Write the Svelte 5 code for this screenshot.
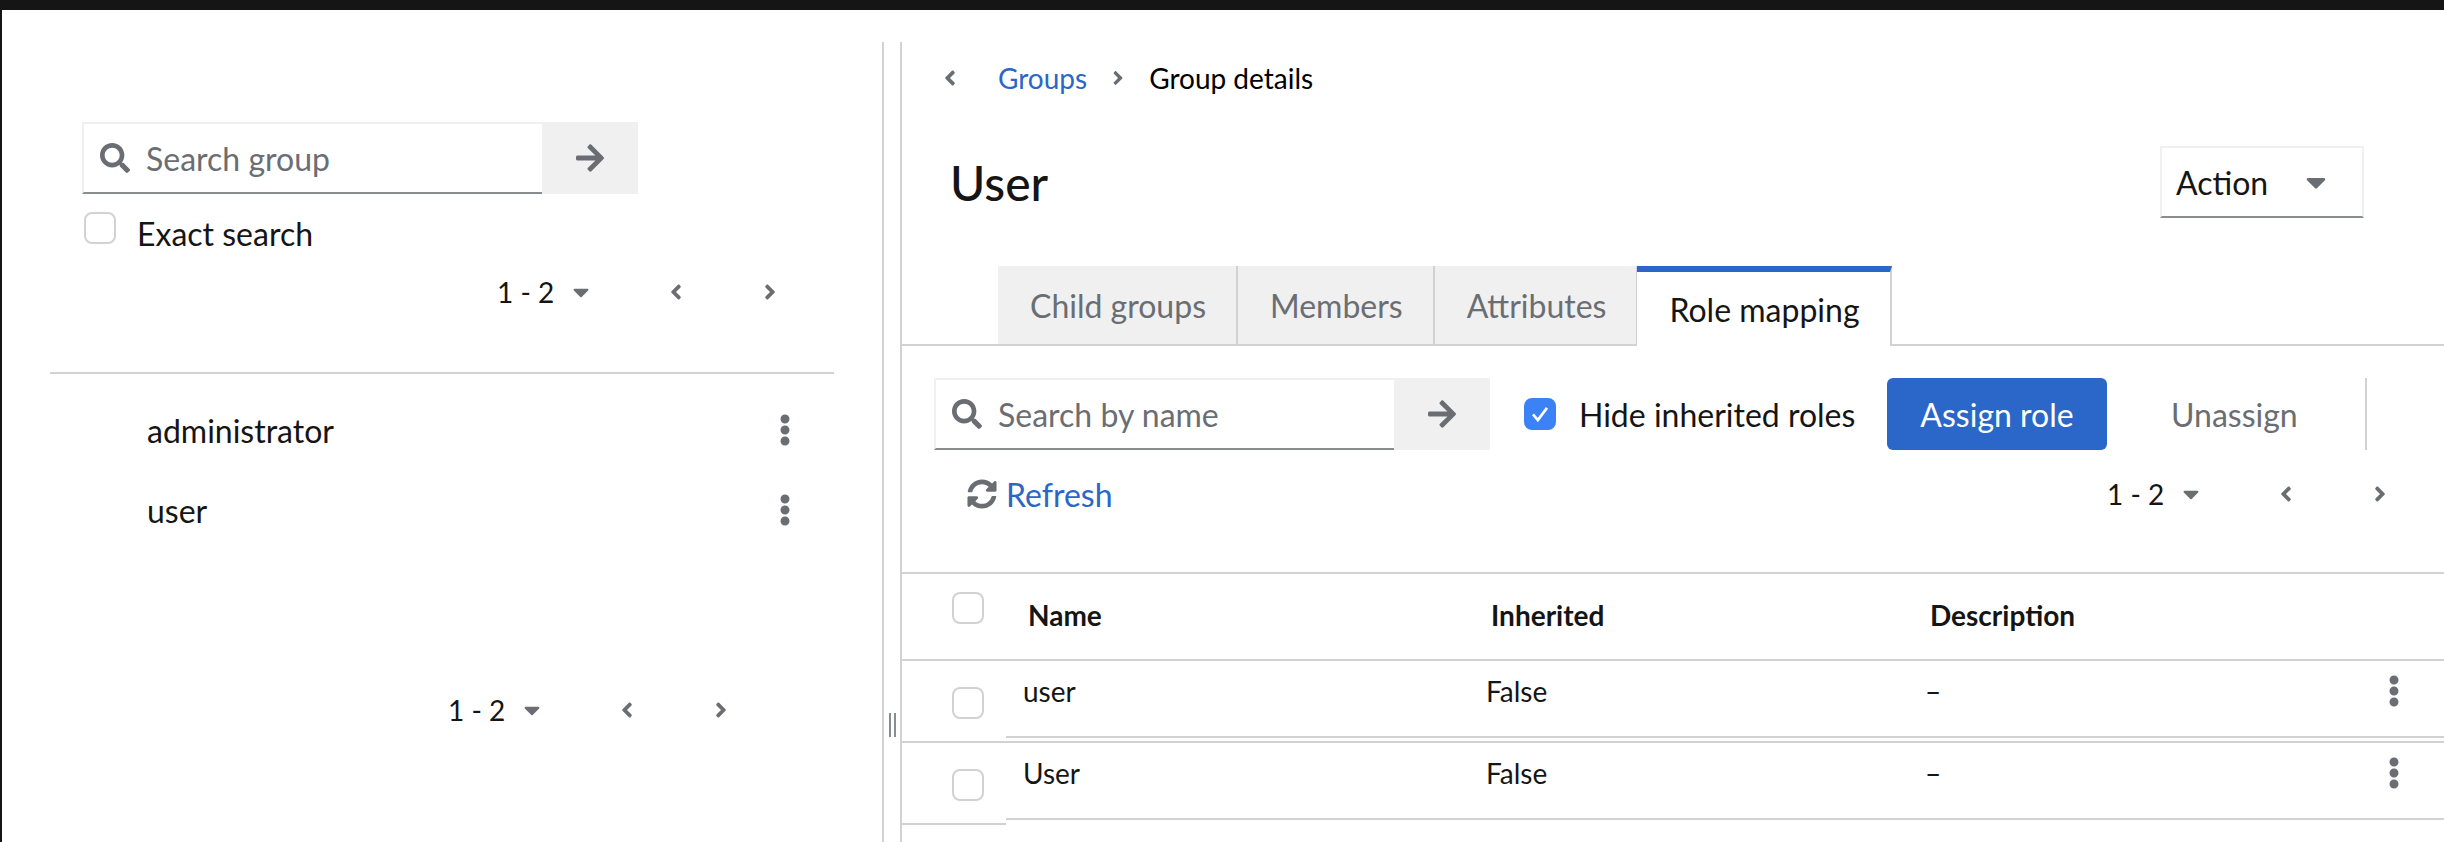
<script>
	const icons = {
		search: ['0 0 512 512', 'M505 442.7L405.3 343c-4.5-4.5-10.6-7-17-7H372c27.6-35.3 44-79.7 44-128C416 93.1 322.9 0 208 0S0 93.1 0 208s93.1 208 208 208c48.3 0 92.7-16.4 128-44v16.3c0 6.4 2.5 12.5 7 17l99.7 99.7c9.4 9.4 24.6 9.4 33.9 0l28.3-28.3c9.4-9.4 9.4-24.6.1-34zM208 336c-70.7 0-128-57.2-128-128 0-70.7 57.2-128 128-128 70.7 0 128 57.2 128 128 0 70.7-57.2 128-128 128z'],
		arrow: ['0 0 448 512', 'M190.5 66.9l22.2-22.2c9.4-9.4 24.6-9.4 33.9 0L441 239c9.4 9.4 9.4 24.6 0 33.9L246.6 467.3c-9.4 9.4-24.6 9.4-33.9 0l-22.2-22.2c-9.5-9.5-9.3-25 .4-34.3L311.4 296H24c-13.3 0-24-10.7-24-24v-32c0-13.3 10.7-24 24-24h287.4L190.9 101.2c-9.8-9.3-10-24.8-.4-34.3z'],
		left: ['0 0 256 512', 'M31.7 239l136-136c9.4-9.4 24.6-9.4 33.9 0l22.6 22.6c9.4 9.4 9.4 24.6 0 33.9L127.9 256l96.4 96.4c9.4 9.4 9.4 24.6 0 33.9L201.7 409c-9.4 9.4-24.6 9.4-33.9 0l-136-136c-9.5-9.4-9.5-24.6-.1-34z'],
		right: ['0 0 256 512', 'M224.3 273l-136 136c-9.4 9.4-24.6 9.4-33.9 0l-22.6-22.6c-9.4-9.4-9.4-24.6 0-33.9l96.4-96.4-96.4-96.4c-9.4-9.4-9.4-24.6 0-33.9L54.3 103c9.4-9.4 24.6-9.4 33.9 0l136 136c9.5 9.4 9.5 24.6.1 34z'],
		caret: ['0 0 320 512', 'M31.3 192h257.3c17.8 0 26.7 21.5 14.1 34.1L174.1 354.8c-7.8 7.8-20.5 7.8-28.3 0L17.2 226.1C4.6 213.5 13.5 192 31.3 192z'],
		kebab: ['0 0 192 512', 'M96 184c39.8 0 72 32.2 72 72s-32.2 72-72 72-72-32.2-72-72 32.2-72 72-72zM24 80c0 39.8 32.2 72 72 72s72-32.2 72-72S135.8 8 96 8 24 40.2 24 80zm0 352c0 39.8 32.2 72 72 72s72-32.2 72-72-32.2-72-72-72-72 32.2-72 72z'],
		sync: ['0 0 512 512', 'M370.72 133.28C339.458 104.008 298.888 87.962 255.848 88c-77.458.068-144.328 53.178-162.791 126.85-1.344 5.363-6.122 9.15-11.651 9.15H24.103c-7.498 0-13.194-6.807-11.807-14.176C33.933 94.924 134.813 8 256 8c66.448 0 126.791 26.136 171.315 68.685L463.03 40.97C478.149 25.851 504 36.559 504 57.941V192c0 13.255-10.745 24-24 24H345.941c-21.382 0-32.09-25.851-16.971-40.971l41.75-41.749zM32 296h134.059c21.382 0 32.09 25.851 16.971 40.971l-41.75 41.75c31.262 29.273 71.835 45.319 114.876 45.28 77.418-.07 144.315-53.144 162.787-126.849 1.344-5.363 6.122-9.15 11.651-9.15h57.304c7.498 0 13.194 6.807 11.807 14.176C478.067 417.076 377.187 504 256 504c-66.448 0-126.791-26.136-171.315-68.685L48.97 471.03C33.851 486.149 8 475.441 8 454.059V320c0-13.255 10.745-24 24-24z']
	};

	const groups = ['administrator', 'user'];
	const tabs = ['Child groups', 'Members', 'Attributes', 'Role mapping'];
	const roles = [
		{ name: 'user', inherited: 'False', description: '–' },
		{ name: 'User', inherited: 'False', description: '–' }
	];
</script>

{#snippet icon(name, cls)}
	<svg class="icon {cls}" viewBox={icons[name][0]} aria-hidden="true"><path d={icons[name][1]} /></svg>
{/snippet}

{#snippet searchBox(text)}
	<div class="search">
		<div class="search-input">
			{@render icon('search', 'search-icon')}
			<span class="placeholder">{text}</span>
		</div>
		<div class="search-go">{@render icon('arrow', 'arrow-icon')}</div>
	</div>
{/snippet}

{#snippet pager(cls)}
	<div class="pager {cls}">
		<span class="count">1 - 2</span>
		{@render icon('caret', 'pager-caret')}
		{@render icon('left', 'pager-prev')}
		{@render icon('right', 'pager-next')}
	</div>
{/snippet}

{#snippet kebab()}
	{@render icon('kebab', 'kebab')}
{/snippet}

<div class="page">
	<div class="topbar"></div>
	<div class="main">
		<aside class="tree">
			{@render searchBox('Search group')}
			<div class="exact">
				<span class="check"></span>
				<span>Exact search</span>
			</div>
			{@render pager('pager-tree-top')}
			<div class="tree-list">
				{#each groups as group}
					<div class="tree-row">
						<span>{group}</span>
						{@render kebab()}
					</div>
				{/each}
			</div>
			{@render pager('pager-tree-bottom')}
		</aside>

		<div class="splitter"><span class="grip"></span></div>

		<section class="detail">
			<nav class="crumbs">
				{@render icon('left', 'crumb-back')}
				<span class="link">Groups</span>
				{@render icon('right', 'crumb-sep')}
				<span>Group details</span>
			</nav>

			<header class="title-row">
				<h1>User</h1>
				<div class="action">
					<span>Action</span>
					{@render icon('caret', 'action-caret')}
				</div>
			</header>

			<div class="tabs">
				{#each tabs as tab, i}
					<div class="tab" class:active={i === 3}>{tab}</div>
				{/each}
			</div>

			<div class="toolbar">
				{@render searchBox('Search by name')}
				<span class="check checked">
					<svg viewBox="0 0 32 32" aria-hidden="true"><path d="M8 16.5l5.5 6.5L24 9" /></svg>
				</span>
				<span class="hide-label">Hide inherited roles</span>
				<span class="btn-primary">Assign role</span>
				<span class="btn-plain">Unassign</span>
				<span class="tool-sep"></span>
			</div>

			<div class="toolbar-2">
				<span class="refresh link">{@render icon('sync', 'sync-icon')}Refresh</span>
				{@render pager('pager-roles')}
			</div>

			<div class="table">
				<div class="thead">
					<span class="check"></span>
					<div class="cols">
						<span>Name</span>
						<span>Inherited</span>
						<span>Description</span>
					</div>
				</div>
				{#each roles as role}
					<div class="row">
						<div class="row-check"><span class="check"></span></div>
						<div class="cols">
							<span>{role.name}</span>
							<span>{role.inherited}</span>
							<span>{role.description}</span>
							{@render kebab()}
						</div>
					</div>
				{/each}
			</div>
		</section>
	</div>
</div>

<style>
	:global(body) {
		margin: 0;
		background: #fff;
	}

	.page {
		height: 842px;
		display: flex;
		flex-direction: column;
		overflow: hidden;
		font-family: Lato, "Liberation Sans", sans-serif;
		font-size: 32px;
		color: #151515;
	}

	.topbar {
		height: 10px;
		background: #151515;
		flex: none;
	}

	.main {
		flex: 1;
		display: flex;
		padding-top: 32px;
		border-left: 2px solid #151515;
		min-height: 0;
	}

	.icon {
		display: block;
		flex: none;
		fill: #6a6e73;
	}

	/* left panel */
	.tree {
		width: 880px;
		flex: none;
		border-right: 2px solid #d2d2d2;
		padding-top: 80px;
		box-sizing: content-box;
	}

	.tree > :global(.search) {
		margin-left: 80px;
	}

	.search {
		display: flex;
		width: 556px;
		height: 72px;
	}

	.search-input {
		width: 460px;
		display: flex;
		align-items: center;
		gap: 16px;
		padding-left: 16px;
		box-sizing: border-box;
		border-top: 2px solid #f0f0f0;
		border-left: 2px solid #f0f0f0;
		border-bottom: 2px solid #8a8d90;
	}

	:global(.search-icon) {
		width: 30px;
		height: 30px;
	}

	.placeholder {
		color: #6a6e73;
	}

	.search-go {
		width: 96px;
		background: #f0f0f0;
		display: flex;
		align-items: center;
		justify-content: center;
	}

	:global(.arrow-icon) {
		width: 28px;
		height: 32px;
	}

	.check {
		display: block;
		flex: none;
		width: 32px;
		height: 32px;
		box-sizing: border-box;
		border: 2px solid #d2d2d2;
		border-radius: 8px;
		background: #fff;
	}

	.check.checked {
		background: #3b82f6;
		border-color: #3b82f6;
		margin-left: 34px;
	}

	.check.checked svg {
		display: block;
		width: 28px;
		height: 28px;
		fill: none;
		stroke: #fff;
		stroke-width: 3;
	}

	.exact {
		display: flex;
		align-items: flex-start;
		gap: 21px;
		margin: 18px 0 0 82px;
		height: 40px;
		line-height: 44px;
	}

	.pager {
		display: flex;
		align-items: center;
		height: 24px;
		justify-content: flex-end;
	}

	.count {
		width: 76px;
		font-size: 28px;
		white-space: nowrap;
	}

	:global(.pager-caret) {
		width: 16px;
		height: 28px;
		margin-right: 80px;
	}

	:global(.pager-prev),
	:global(.pager-next) {
		width: 14px;
		height: 24px;
		fill: #d2d2d2;
	}

	:global(.pager-next) {
		margin-left: 80px;
	}

	.pager-tree-top {
		margin: 28px 105px 0 0;
	}

	.pager-tree-bottom {
		margin: 148px 154px 0 0;
	}

	.tree-list {
		margin: 68px 48px 0;
		padding-top: 16px;
		border-top: 2px solid #d2d2d2;
	}

	.tree-row {
		height: 80px;
		display: flex;
		align-items: center;
		justify-content: space-between;
		padding: 0 43px 0 97px;
	}

	:global(.kebab) {
		width: 12px;
		height: 32px;
	}

	/* splitter */
	.splitter {
		width: 16px;
		flex: none;
		position: relative;
	}

	.grip {
		position: absolute;
		left: 5px;
		top: 671px;
		width: 3px;
		height: 24px;
		border-left: 2px solid #8a8d90;
		border-right: 2px solid #8a8d90;
	}

	/* right panel */
	.detail {
		flex: 1;
		min-width: 0;
		border-left: 2px solid #d2d2d2;
	}

	.crumbs {
		display: flex;
		align-items: center;
		height: 32px;
		margin-top: 20px;
		padding-left: 40px;
		font-size: 28px;
		color: #000;
	}

	:global(.crumb-back) {
		width: 16px;
		height: 24px;
		margin-right: 40px;
	}

	:global(.crumb-sep) {
		width: 14px;
		height: 22px;
		margin: 0 24px;
		fill: #8a8d90;
	}

	.link {
		color: #2b66c9;
	}

	.title-row {
		display: flex;
		align-items: center;
		justify-content: space-between;
		height: 72px;
		margin-top: 52px;
		padding: 0 80px 0 48px;
	}

	h1 {
		margin: 0;
		font-size: 48px;
		font-weight: 500;
	}

	.action {
		width: 204px;
		height: 72px;
		box-sizing: border-box;
		display: flex;
		align-items: center;
		justify-content: space-between;
		padding: 0 36px 0 14px;
		border: 2px solid #f0f0f0;
		border-bottom-color: #8a8d90;
	}

	:global(.action-caret) {
		width: 20px;
		height: 32px;
		fill: #151515;
	}

	.tabs {
		display: flex;
		height: 78px;
		margin-top: 48px;
		padding-left: 96px;
		border-bottom: 2px solid #d2d2d2;
	}

	.tab {
		padding: 0 30px 0 32px;
		display: flex;
		align-items: center;
		background: #f0f0f0;
		border-right: 2px solid #d2d2d2;
		color: #6a6e73;
	}

	.tab.active {
		background: #fff;
		color: #151515;
		border-top: 6px solid #2b66c9;
		margin-bottom: -2px;
		margin-left: -1px;
	}

	.toolbar {
		display: flex;
		align-items: center;
		height: 72px;
		margin-top: 32px;
		padding-left: 32px;
	}

	.hide-label {
		margin-left: 23px;
		width: 308px;
	}

	.btn-primary {
		width: 220px;
		height: 72px;
		display: flex;
		align-items: center;
		justify-content: center;
		background: #2b66c9;
		color: #fff;
		border-radius: 6px;
	}

	.btn-plain {
		margin-left: 64px;
		width: 194px;
		color: #6a6e73;
	}

	.tool-sep {
		width: 2px;
		height: 72px;
		background: #d2d2d2;
	}

	.toolbar-2 {
		display: flex;
		align-items: center;
		justify-content: space-between;
		height: 32px;
		margin-top: 28px;
		padding: 0 57px 0 65px;
	}

	.refresh {
		display: flex;
		align-items: center;
		gap: 9px;
	}

	:global(.sync-icon) {
		width: 30px;
		height: 30px;
		fill: #2b66c9;
	}

	.table {
		margin-top: 62px;
		font-size: 28px;
	}

	.thead {
		display: flex;
		height: 85px;
		border-top: 2px solid #d2d2d2;
		border-bottom: 2px solid #d2d2d2;
		padding-left: 50px;
		box-sizing: content-box;
		font-weight: 700;
	}

	.thead > .check {
		margin-top: 18px;
		margin-right: 22px;
	}

	.thead .cols {
		padding-top: 24px;
	}

	.cols {
		flex: 1;
		display: grid;
		grid-template-columns: 463px 439px 1fr 12px;
		padding: 0 44px 0 17px;
		align-items: center;
		box-sizing: border-box;
	}

	.thead .cols {
		align-items: start;
		grid-template-columns: 463px 439px 1fr;
		padding-left: 22px;
	}

	.row {
		display: flex;
		height: 82px;
		box-sizing: border-box;
	}

	.row:nth-child(2) {
		border-bottom: 2px solid #d2d2d2;
	}

	.row .cols {
		height: 77px;
		border-bottom: 2px solid #d2d2d2;
		padding-bottom: 16px;
	}

	.row-check {
		width: 104px;
		flex: none;
		padding: 26px 0 0 50px;
		box-sizing: border-box;
	}

	.row:last-child .row-check {
		border-bottom: 2px solid #d2d2d2;
	}
</style>
